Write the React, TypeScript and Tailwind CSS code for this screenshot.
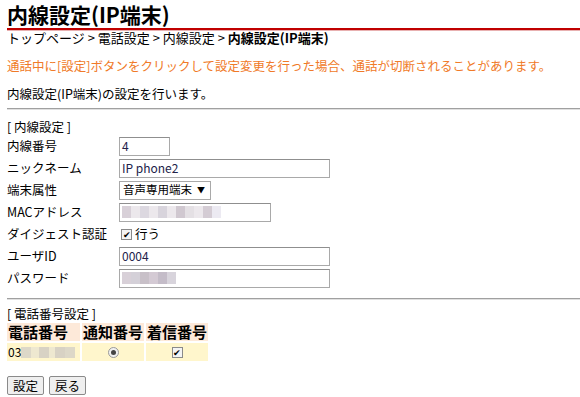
import React from 'react';

const font = { fontFamily: '"Noto Sans CJK JP", "Liberation Sans", sans-serif' };

function Blur({ widths }: { widths: string[] }) {
  return (
    <span className="flex items-center h-full">
      {widths.map((c, i) => (
        <span key={i} className={`inline-block h-[12px] w-[9px] ${c}`} />
      ))}
    </span>
  );
}

function Row({ label, children }: { label: string; children: React.ReactNode }) {
  return (
    <div className="flex items-center h-[22px]">
      <span className="w-[112px] shrink-0">{label}</span>
      {children}
    </div>
  );
}

const inputCls =
  'h-[19px] border border-[#a9a9a9] border-t-[#8f8f8f] bg-white px-[2px] text-[12px] text-[#22224a] flex items-center';

export default function App() {
  return (
    <div className="w-[580px] h-[397px] bg-white text-[12.5px] text-black overflow-hidden" style={font}>
      <div className="pl-[7px]">
        <h1 className="text-[21px] font-bold leading-[28px] whitespace-nowrap">内線設定(IP端末)</h1>
        <div className="h-[3px] bg-[#c00000] border-b border-[#e8b0b0]" />
        <div className="leading-[13px] text-[13px] whitespace-nowrap">
          トップページ &gt; 電話設定 &gt; 内線設定 &gt; <b>内線設定(IP端末)</b>
        </div>
        <p className="mt-[14px] text-[#f07a28] leading-[16px]">
          通話中に[設定]ボタンをクリックして設定変更を行った場合、通話が切断されることがあります。
        </p>
        <p className="mt-[12px] leading-[16px]">内線設定(IP端末)の設定を行います。</p>
        <div className="mt-[6px] h-[2px] bg-[#a0a0a0] border-b border-[#e0e0e0]" />

        <div className="mt-[9px] leading-[16px]">[ 内線設定 ]</div>
        <Row label="内線番号">
          <div className={`${inputCls} w-[51px]`}>4</div>
        </Row>
        <Row label="ニックネーム">
          <div className={`${inputCls} w-[211px]`}>IP phone2</div>
        </Row>
        <Row label="端末属性">
          <div className="h-[19px] w-[92px] border border-[#a9a9a9] bg-white flex items-center px-[3px] text-[11.5px] gap-[5px] whitespace-nowrap">
            <span>音声専用端末</span>
            <span className="text-[8px]">▼</span>
          </div>
        </Row>
        <Row label="MACアドレス">
          <div className={`${inputCls} w-[152px]`}>
            <Blur widths={['bg-[#d8d0d8]', 'bg-[#ece8ec]', 'bg-[#dcd8e0]', 'bg-[#ece8ec]', 'bg-[#d8d4dc]', 'bg-[#ece8ec]', 'bg-[#d0c8d0]', 'bg-[#e4e0e4]', 'bg-[#ece8ec]', 'bg-[#d4ccd4]', 'bg-[#eceaf2]']} />
          </div>
        </Row>
        <Row label="ダイジェスト認証">
          <label className="flex items-center gap-[3px]">
            <span className="w-[11px] h-[11px] border border-[#8a8a8a] bg-[#f4f4f4] text-[9px] leading-[9px] flex items-center justify-center ml-[2px]">✔</span>
            <span>行う</span>
          </label>
        </Row>
        <Row label="ユーザID">
          <div className={`${inputCls} w-[211px]`}>0004</div>
        </Row>
        <Row label="パスワード">
          <div className={`${inputCls} w-[211px]`}>
            <Blur widths={['bg-[#d8d0d8]', 'bg-[#d4d0d8]', 'bg-[#c8c0c8]', 'bg-[#d4cad4]', 'bg-[#c4bcc8]', 'bg-[#d8d4dc]']} />
          </div>
        </Row>

        <div className="mt-[9px] h-[2px] bg-[#a0a0a0] border-b border-[#e0e0e0]" />
        <div className="mt-[6px] leading-[16px]">[ 電話番号設定 ]</div>
        <table className="border-separate border-spacing-[2px] -ml-[2px] -mt-[1px]">
          <thead>
            <tr className="text-[15px] font-bold leading-[18px]">
              <th className="bg-[#fde9d9] text-left px-[1px] w-[73px]">電話番号</th>
              <th className="bg-[#fde9d9] text-left px-[1px] w-[62px]">通知番号</th>
              <th className="bg-[#fde9d9] text-left px-[1px] w-[62px]">着信番号</th>
            </tr>
          </thead>
          <tbody>
            <tr className="h-[18px]">
              <td className="bg-[#fff6cc] px-[1px]">
                <span className="flex items-center">
                  <span className="text-[12px]">03</span>
                  <span className="inline-block h-[11px] w-[10px] bg-[#ddd8c8]" />
                  <span className="inline-block h-[11px] w-[8px] bg-[#eee8d0]" />
                  <span className="inline-block h-[11px] w-[10px] bg-[#d8d2c4]" />
                  <span className="inline-block h-[11px] w-[6px] bg-[#eee8d0]" />
                  <span className="inline-block h-[11px] w-[10px] bg-[#d8d2c4]" />
                  <span className="inline-block h-[11px] w-[10px] bg-[#ddd8c8]" />
                </span>
              </td>
              <td className="bg-[#fff6cc]">
                <span className="mx-auto w-[11px] h-[11px] rounded-full border border-[#9a9a9a] bg-[#f0f0f0] flex items-center justify-center">
                  <span className="w-[5px] h-[5px] rounded-full bg-[#444]" />
                </span>
              </td>
              <td className="bg-[#fff6cc]">
                <span className="mx-auto w-[11px] h-[11px] border border-[#8a8a8a] bg-[#f4f4f4] text-[9px] leading-[9px] flex items-center justify-center">✔</span>
              </td>
            </tr>
          </tbody>
        </table>

        <div className="mt-[13px] flex gap-[5px]">
          <button className="h-[19px] px-[5px] border border-[#8a8a8a] bg-[#efefef] text-[12.5px] leading-[16px] rounded-[2px]">設定</button>
          <button className="h-[19px] px-[5px] border border-[#8a8a8a] bg-[#efefef] text-[12.5px] leading-[16px] rounded-[2px]">戻る</button>
        </div>
      </div>
    </div>
  );
}
